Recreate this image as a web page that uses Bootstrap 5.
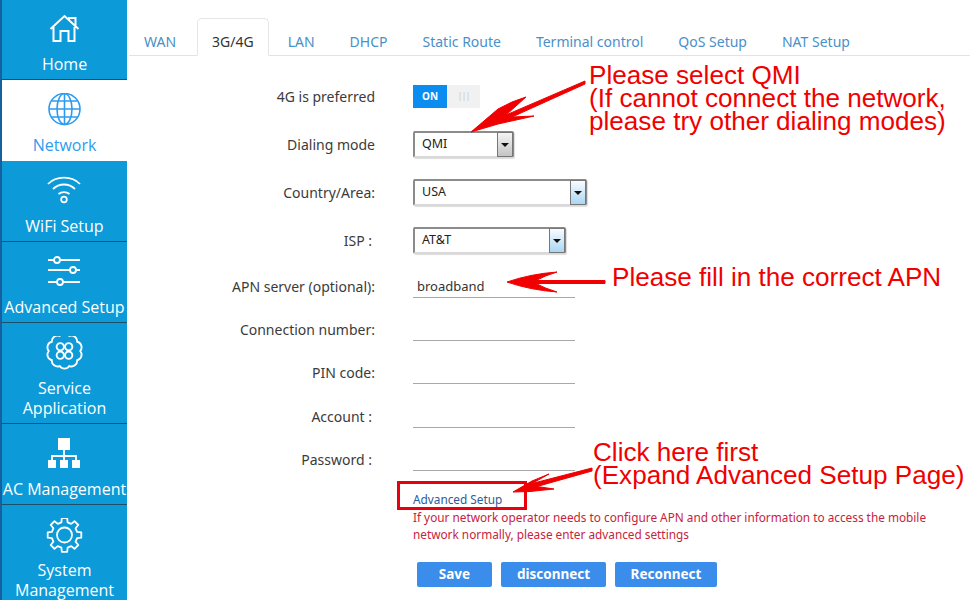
<!DOCTYPE html>
<html lang="en">
<head>
<meta charset="utf-8">
<title>3G/4G Setup</title>
<link href="https://cdn.jsdelivr.net/npm/bootstrap@5.3.0/dist/css/bootstrap.min.css" rel="stylesheet">
<style>
html, body { height: 600px; overflow: hidden; background: #fff; }
body { font-family: "Noto Sans", "Liberation Sans", sans-serif; position: relative; }
.page-wrap { height: 600px; }
.side-bar { width: 127px; flex: none; height: 600px; overflow: hidden; background: #0c9ad8; border-left: 2px solid #17609f; }
.side-item { flex: none; height: 81px; color: #fff; font-family: "Open Sans", sans-serif; font-size: 16px; line-height: 20px; text-decoration: none; text-align: center; border-bottom: 1px solid #1d4f68; white-space: nowrap; }
.side-item:hover { color: #fff; }
.side-item svg { display: block; flex: none; width: 40px; height: 40px; margin-top: 13px; margin-bottom: 2px; fill: none; stroke: #fff; stroke-width: 1.8; }
.side-item.tall { height: 101px; }
.side-item.first { height: 80px; }
.side-item.first svg { margin-top: 12px; }
.side-item.last { border-bottom: 0; height: 120px; }
.side-item.here { background: #fff; color: #2d9cf0; border-bottom: 0; }
.side-item.here svg { stroke: #2d9cf0; stroke-width: 1.6; }
.main-pane { width: 843px; flex: none; padding-top: 18px; }
.tab-strip { margin-left: 2px; height: 38px; border-bottom-color: #e3e3e3; flex-wrap: nowrap; font-size: 14px; }
.tab-strip .nav-link { color: #4a90c8; padding: 13px 14px 0; height: 38px; line-height: 20px; border-radius: 5px 5px 0 0; white-space: nowrap; margin-right: 5px; }
.tab-strip .nav-link.active { color: #333; border-color: #e6e6e6 #e6e6e6 #fff; margin-left: 1px; margin-right: 4px; }
.form-area { padding-top: 17px; font-size: 14px; color: #3b3b3b; }
.form-line { height: 48px; }
.form-line.top-line { height: 47.5px; }
.form-line.short { height: 43.4px; }
.field-name { width: 248px; flex: none; text-align: right; }
.field-name.tail-gap { padding-right: 3px; }
.field-box { margin-left: 38px; }
.switch-on { width: 34px; height: 23px; background: #0a8cf0; color: #fff; font-size: 10px; font-weight: 700; line-height: 23px; text-align: center; }
.switch-off { width: 33px; height: 23px; background: #f1f1f1; color: #c8c8c8; font-size: 9px; letter-spacing: -1px; line-height: 22px; text-align: center; }
.drop-box { height: 27px; border: 2px solid #8b8b8b; border-right-width: 1px; border-bottom: 2px solid #d8d8d8; border-radius: 2px; font-size: 12.5px; color: #222; padding-left: 7px; box-shadow: 1px 1px 1px #ddd; }
.drop-box.w-qmi { width: 101px; }
.drop-box.w-usa { width: 174px; }
.drop-box.w-att { width: 153px; }
.drop-arrow { width: 16px; height: 25px; margin-left: auto; border: 1px solid #777; background: linear-gradient(#fafcff, #a9d6f4); position: relative; flex: none; }
.drop-arrow.grey { background: linear-gradient(#f4f4f4, #c4c4c4); }
.drop-arrow::after { content: ""; position: absolute; left: 3px; top: 10px; border: 4px solid transparent; border-top: 4px solid #111; border-bottom: 0; }
.under-input { width: 162px; height: 23px; border: 0; border-bottom: 1px solid #a8a8a8; outline: 0; padding: 1px 4px 0; font-size: 13px; color: #333; background: transparent; }
.lower-block { margin-left: 286px; margin-top: 10px; font-size: 11.8px; line-height: 17.5px; }
.adv-link { color: #2b5c9c; text-decoration: none; display: block; }
.adv-hint { color: #c8233c; width: 540px; }
.btn-row { margin-left: 290px; margin-top: 18px; gap: 9px; }
.btn-blue { height: 25px; padding: 0; background: #3a8dea; border: 0; border-radius: 2px; color: #fff; font-size: 13.5px; font-weight: 700; line-height: 25px; }
.btn-blue:hover { background: #3a8dea; color: #fff; }
.w-save { width: 75px; }
.w-disc { width: 105px; }
.w-reco { width: 102px; }
.mark-layer { position: absolute; left: 0; top: 0; width: 970px; height: 600px; pointer-events: none; fill: #f00000; stroke: #f00000; stroke-width: 1; }
.note-text { position: absolute; color: #f00000; font-family: "Liberation Sans", Arial, sans-serif; font-size: 26.1px; line-height: 23px; white-space: nowrap; margin: 0; }
.note-qmi { left: 589px; top: 64px; }
.note-apn { left: 612px; top: 266px; }
.note-adv { left: 593px; top: 441px; }
.red-frame { position: absolute; left: 397px; top: 481px; width: 130px; height: 29px; border: 3px solid #e8000c; }
</style>
</head>
<body>
<div class="d-flex page-wrap">
  <nav class="side-bar d-flex flex-column">
    <a href="#" class="side-item first d-flex flex-column align-items-center">
      <svg viewBox="0 0 40 40"><path stroke-width="2" d="M5.500 17 19.500 4 33.500 17M8.500 15V29H15.500V19H23.500V29H29.500V15M24 8V6H30.500V14"/></svg>
      Home</a>
    <a href="#" class="side-item here d-flex flex-column align-items-center">
      <svg viewBox="0 0 40 40"><g transform="translate(1 0)"><circle cx="18.500" cy="16" r="15.500"/><ellipse cx="18.500" cy="16" rx="7.500" ry="15.500"/><path d="M18.500 .5V31.500M3 16H34M5.500 8H31.500M5.500 24H31.500"/></g></svg>
      Network</a>
    <a href="#" class="side-item d-flex flex-column align-items-center">
      <svg viewBox="0 0 40 40"><path d="M3 10C11 1.500 27 1.500 35 10M8 15C14 9 24 9 30 15M13.500 20C16.500 17.500 21.500 17.500 24.500 20"/><circle cx="19" cy="25.500" r="2.800"/></svg>
      WiFi Setup</a>
    <a href="#" class="side-item d-flex flex-column align-items-center">
      <svg viewBox="0 0 40 40"><path d="M3 4H9M15 4H35M3 14H25M31 14H35M3 26H12M18 26H35" transform="translate(0 1)"/><circle cx="12" cy="5" r="3"/><circle cx="28" cy="15" r="3"/><circle cx="15" cy="27" r="3"/></svg>
      Advanced Setup</a>
    <a href="#" class="side-item tall d-flex flex-column align-items-center">
      <svg viewBox="0 0 40 40"><g transform="translate(19.500 15) scale(1.05)"><path d="M15 0A5.500 5.500 0 0 1 12.100 8.800A5.500 5.500 0 0 1 4.600 14.300A5.500 5.500 0 0 1 -4.600 14.300A5.500 5.500 0 0 1 -12.100 8.800A5.500 5.500 0 0 1 -15 0A5.500 5.500 0 0 1 -12.100 -8.800A5.500 5.500 0 0 1 -4.600 -14.300A5.500 5.500 0 0 1 4.600 -14.300A5.500 5.500 0 0 1 12.100 -8.800A5.500 5.500 0 0 1 15 0Z"/><circle cx="-4" cy="-4" r="3.500"/><circle cx="4" cy="-4" r="3.500"/><circle cx="-4" cy="4" r="3.500"/><circle cx="4" cy="4" r="3.500"/></g></svg>
      <span>Service<br>Application</span></a>
    <a href="#" class="side-item d-flex flex-column align-items-center">
      <svg viewBox="0 0 40 40" style="fill:#fff"><rect x="13" y="1" width="12" height="12" stroke="none"/><path d="M19 13V19M7 25V19H31V25M19 19V25" fill="none"/><rect x="3" y="23" width="8" height="8" stroke="none"/><rect x="15" y="23" width="8" height="8" stroke="none"/><rect x="27" y="23" width="8" height="8" stroke="none"/></svg>
      AC Management</a>
    <a href="#" class="side-item last d-flex flex-column align-items-center">
      <svg viewBox="0 0 40 40"><g transform="translate(19.500 17)"><path stroke-linejoin="round" d="M12.600 -3.100L16.800 -2.700L16.800 2.700L12.600 3.100L11.100 6.700L13.800 10L10 13.800L6.700 11.100L3.100 12.600L2.700 16.800L-2.700 16.800L-3.100 12.600L-6.700 11.100L-10 13.800L-13.800 10L-11.100 6.700L-12.600 3.100L-16.800 2.700L-16.800 -2.700L-12.600 -3.100L-11.100 -6.700L-13.800 -10L-10 -13.800L-6.700 -11.100L-3.100 -12.600L-2.700 -16.800L2.700 -16.800L3.100 -12.600L6.700 -11.100L10 -13.800L13.800 -10L11.100 -6.700Z"/><circle r="7.500"/></g></svg>
      <span>System<br>Management</span></a>
  </nav>

  <main class="main-pane">
    <ul class="nav nav-tabs tab-strip">
      <li class="nav-item"><a class="nav-link" href="#">WAN</a></li>
      <li class="nav-item"><a class="nav-link active" href="#">3G/4G</a></li>
      <li class="nav-item"><a class="nav-link" href="#">LAN</a></li>
      <li class="nav-item"><a class="nav-link" href="#">DHCP</a></li>
      <li class="nav-item"><a class="nav-link" href="#">Static Route</a></li>
      <li class="nav-item"><a class="nav-link" href="#">Terminal control</a></li>
      <li class="nav-item"><a class="nav-link" href="#">QoS Setup</a></li>
      <li class="nav-item"><a class="nav-link" href="#">NAT Setup</a></li>
    </ul>

    <div class="form-area">
      <div class="form-line top-line d-flex align-items-center">
        <div class="field-name">4G is preferred</div>
        <div class="field-box d-flex"><div class="switch-on">ON</div><div class="switch-off">|||</div></div>
      </div>
      <div class="form-line d-flex align-items-center">
        <div class="field-name">Dialing mode</div>
        <div class="field-box drop-box w-qmi d-flex align-items-center">QMI<span class="drop-arrow grey"></span></div>
      </div>
      <div class="form-line d-flex align-items-center">
        <div class="field-name">Country/Area:</div>
        <div class="field-box drop-box w-usa d-flex align-items-center">USA<span class="drop-arrow"></span></div>
      </div>
      <div class="form-line d-flex align-items-center">
        <div class="field-name tail-gap">ISP :</div>
        <div class="field-box drop-box w-att d-flex align-items-center">AT&amp;T<span class="drop-arrow"></span></div>
      </div>
      <div class="form-line short d-flex align-items-center">
        <div class="field-name">APN server (optional):</div>
        <input class="field-box under-input" value="broadband">
      </div>
      <div class="form-line short d-flex align-items-center">
        <div class="field-name">Connection number:</div>
        <input class="field-box under-input">
      </div>
      <div class="form-line short d-flex align-items-center">
        <div class="field-name">PIN code:</div>
        <input class="field-box under-input">
      </div>
      <div class="form-line short d-flex align-items-center">
        <div class="field-name tail-gap">Account :</div>
        <input class="field-box under-input">
      </div>
      <div class="form-line short d-flex align-items-center">
        <div class="field-name tail-gap">Password :</div>
        <input class="field-box under-input">
      </div>

      <div class="lower-block">
        <a href="#" class="adv-link">Advanced Setup</a>
        <div class="adv-hint">If your network operator needs to configure APN and other information to access the mobile network normally, please enter advanced settings</div>
      </div>
      <div class="btn-row d-flex">
        <button class="btn btn-blue w-save">Save</button>
        <button class="btn btn-blue w-disc">disconnect</button>
        <button class="btn btn-blue w-reco">Reconnect</button>
      </div>
    </div>
  </main>
</div>

<p class="note-text note-qmi">Please select QMI<br>(If cannot connect the network,<br>please try other dialing modes)</p>
<p class="note-text note-apn">Please fill in the correct APN</p>
<p class="note-text note-adv">Click here first<br>(Expand Advanced Setup Page)</p>
<div class="red-frame"></div>

<svg class="mark-layer" viewBox="0 0 970 600">
  <path d="M471 132L498 109Q512 101 526 97L506 115L585 81V84L512 117L534 116L498 124Z"/>
  <path d="M507 282Q530 274 557 272Q544 276 536 280.500H605V283.500H536Q544 288 557 292Q530 290 507 282Z"/>
  <path d="M513 492L532 481L549 474L532 483.500L592 468V471L537 486.500L554 489L530 491.500Z"/>
</svg>

<script src="https://cdn.jsdelivr.net/npm/bootstrap@5.3.0/dist/js/bootstrap.bundle.min.js"></script>
</body>
</html>
